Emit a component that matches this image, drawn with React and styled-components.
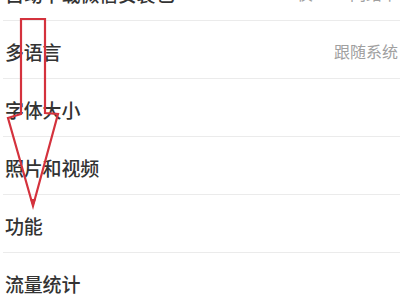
import React from 'react'
import styled, { createGlobalStyle } from 'styled-components';

const GlobalStyle = createGlobalStyle`
html, body {
  margin: 0;
  padding: 0;
  background: #ffffff;
}
`;

const Page = styled.div`
position: relative;
width: 400px;
height: 300px;
overflow: hidden;
background: #ffffff;
font-family: "Noto Sans CJK SC", "Noto Sans", sans-serif;
`;

const List = styled.div`
display: flex;
flex-direction: column;
margin-top: -37px;
`;

const Row = styled.div`
display: flex;
align-items: center;
justify-content: space-between;
height: 58px;
box-sizing: border-box;
padding: 3px 0 0 2px;
margin-left: 3px;
border-bottom: ${props => props.last ? 'none' : '1px solid #ebebeb'};
`;

const Label = styled.span`
font-size: 19px;
font-weight: 500;
color: #333333;
letter-spacing: -0.2px;
`;

const Value = styled.span`
font-size: 16px;
color: #a0a0a0;
margin-right: 2px;
`;

const Arrow = styled.svg`
position: absolute;
left: 0;
top: 0;
width: 400px;
height: 300px;
pointer-events: none;
`;

const items = [
  { label: '自动下载微信安装包', value: '仅Wi-Fi网络下' },
  { label: '多语言', value: '跟随系统' },
  { label: '字体大小' },
  { label: '照片和视频' },
  { label: '功能' },
  { label: '流量统计', last: true },
];

const App = () => {
  return (
  <>
    <GlobalStyle/>
    <Page>
      <List>
        {items.map((item, index) => (
          <Row key={index} last={item.last}>
            <Label>{item.label}</Label>
            {item.value && <Value>{item.value}</Value>}
          </Row>
        ))}
      </List>
      <Arrow viewBox="0 0 400 300">
        <path
          d="M21 19 L45 19 L45 113 L58 114 L33 206 L8 118 L21 114 Z"
          fill="none"
          stroke="#d4323d"
          strokeWidth="2.2"
          strokeLinejoin="miter"
        />
        <path d="M30 199 L36 199 L33 207 Z" fill="#d4323d"/>
      </Arrow>
    </Page>
  </>
  );
}

export default App;
